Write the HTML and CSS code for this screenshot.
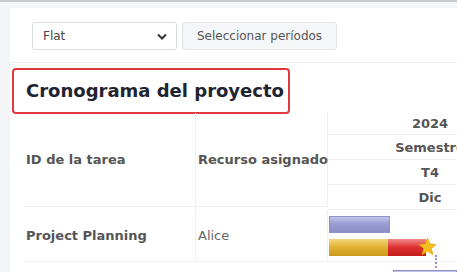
FILE: index.html
```html
<!DOCTYPE html>
<html lang="es">
<head>
    <meta charset="UTF-8">
    <title>Cronograma del proyecto</title>
    <link rel="stylesheet" href="styles.css">
</head>
<body>
    <div class="page">
        <div class="panel">
            <div class="toolbar">
                <div class="select">
                    <span>Flat</span>
                    <svg class="caret" width="10" height="7" viewBox="0 0 10 7"><path d="M1 1.5 L5 5.5 L9 1.5" fill="none" stroke="#333" stroke-width="2"/></svg>
                </div>
                <button class="btn">Seleccionar períodos</button>
            </div>
            <div class="content">
                <div class="title-box">Cronograma del proyecto</div>
                <div class="grid">
                    <div class="head-cell first">ID de la tarea</div>
                    <div class="head-cell res">Recurso asignado</div>
                    <div class="time-head">
                        <div class="th-row year">2024</div>
                        <div class="th-row">Semestre</div>
                        <div class="th-row">T4</div>
                        <div class="th-row">Dic</div>
                    </div>
                    <div class="cell first">Project Planning</div>
                    <div class="cell res light">Alice</div>
                    <div class="bars">
                        <div class="bar plan"></div>
                        <div class="bar actual">
                            <div class="done"></div>
                            <div class="late"></div>
                        </div>
                        <svg class="star" width="19" height="19" viewBox="0 0 24 24"><path d="M12 1.5 L15 8.8 L22.8 9.4 L16.8 14.5 L18.7 22.2 L12 18 L5.3 22.2 L7.2 14.5 L1.2 9.4 L9 8.8 Z" fill="#f6bf1d" stroke="#e3a400" stroke-width="1"/></svg>
                        <div class="link"></div>
                        <div class="link-dot"></div>
                        <div class="bar next"></div>
                    </div>
                </div>
            </div>
        </div>
    </div>
</body>
</html>
```

FILE: styles.css
```css
body {
    margin: 0;
    font-family: "DejaVu Sans", Verdana, sans-serif;
    background: #f3f5f9;
    border-top: 2px solid #c9cbd0;
    height: 270px;
    overflow: hidden;
}
.page {
    padding: 6px 0 0 10px;
}
.panel {
    background: #fff;
    overflow: hidden;
    height: 264px;
}
.toolbar {
    display: flex;
    align-items: center;
    gap: 5px;
    padding: 14px 0 12px 22px;
    border-bottom: 1px solid #eceef2;
}
.select {
    width: 145px;
    height: 28px;
    border: 1px solid #dadde2;
    border-radius: 3px;
    display: flex;
    align-items: center;
    justify-content: space-between;
    padding: 0 9px 0 10px;
    box-sizing: border-box;
    font-size: 12px;
    color: #444;
}
.btn {
    height: 28px;
    padding: 0 14px;
    background: #f5f6f8;
    border: 1px solid #e2e4e8;
    border-radius: 3px;
    font-family: "DejaVu Sans", Verdana, sans-serif;
    font-size: 12px;
    color: #555;
}
.content {
    padding: 5px 0 0 2px;
}
.title-box {
    width: 278px;
    height: 46px;
    box-sizing: border-box;
    border: 2px solid #e0393f;
    border-radius: 4px;
    padding: 0 0 1px 12px;
    display: flex;
    align-items: center;
    font-size: 18px;
    font-weight: bold;
    color: #1f2430;
}
.grid {
    display: grid;
    grid-template-columns: 172px 132px 204px;
    margin-left: 12px;
    margin-top: -1px;
}
.head-cell, .cell {
    font-size: 13px;
    font-weight: bold;
    color: #555;
    display: flex;
    align-items: center;
    padding-left: 2px;
    white-space: nowrap;
    border-bottom: 1px solid #eef0f3;
}
.head-cell {
    height: 94px;
    box-sizing: border-box;
}
.first, .res {
    border-right: 1px solid #eef0f3;
}
.cell {
    height: 51px;
}
.light {
    font-weight: normal;
    color: #666;
}
.time-head {
    display: flex;
    flex-direction: column;
    border-bottom: 1px solid #eef0f3;
}
.th-row {
    height: 24px;
    border-bottom: 1px solid #eef0f3;
    display: flex;
    align-items: center;
    justify-content: center;
    font-size: 13px;
    font-weight: bold;
    color: #555;
    white-space: nowrap;
}
.year {
    height: 21px;
}
.th-row:last-child {
    border-bottom: none;
}
.bars {
    position: relative;
    height: 51px;
    border-bottom: 1px solid #eef0f3;
}
.bar {
    position: absolute;
    height: 17px;
    box-sizing: border-box;
}
.plan {
    left: 1px;
    top: 6px;
    width: 61px;
    background: linear-gradient(#c2c4e8, #9a9ed2 45%, #8a8ec6);
    border: 1px solid #8e92c8;
}
.actual {
    left: 1px;
    top: 29px;
    width: 97px;
    display: flex;
}
.done {
    width: 59px;
    background: linear-gradient(#f4d77c, #dfb032 50%, #c99a1c);
}
.late {
    flex: 1;
    background: linear-gradient(#f48a8a, #dc3030 50%, #c41c1c);
}
.star {
    position: absolute;
    left: 90px;
    top: 27px;
}
.link {
    position: absolute;
    left: 107px;
    top: 45px;
    height: 20px;
    border-left: 2px dotted #8f93d6;
}
.link-dot {
    position: absolute;
    left: 59px;
    top: 63px;
    width: 3px;
    border-top: 2px dotted #8f93d6;
}
.next {
    left: 65px;
    top: 60px;
    width: 64px;
    background: linear-gradient(#c2c4e8, #9a9ed2);
    border: 1px solid #8e92c8;
}
```
